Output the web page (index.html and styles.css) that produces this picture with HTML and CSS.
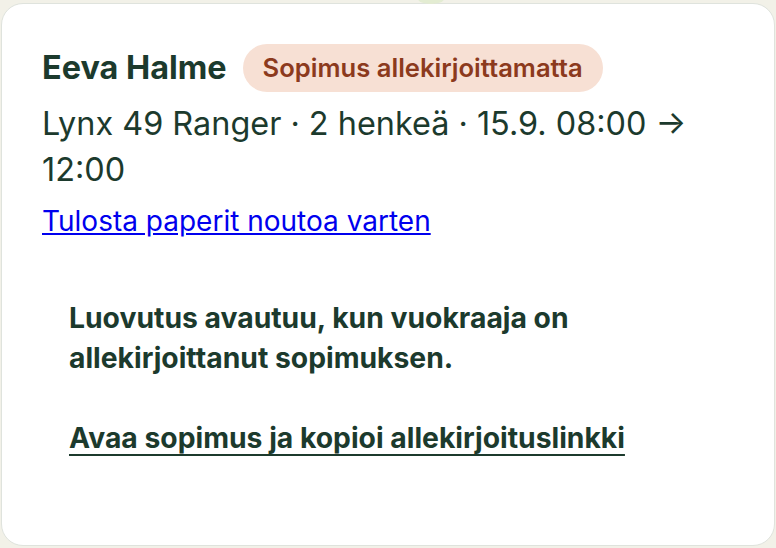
FILE: index.html
```html
<!DOCTYPE html>
<html lang="fi">

<head>
    <meta charset="UTF-8">
    <meta name="viewport" content="width=device-width, initial-scale=1.0">
    <title>Luovutus</title>
    <link rel="stylesheet" href="styles.css">
</head>

<body>
    <div class="tab-peek"></div>
    <div class="booking-card">
        <div class="booking-head">
            <h2 class="renter">Eeva Halme</h2>
            <span class="badge">Sopimus allekirjoittamatta</span>
        </div>
        <p class="booking-meta">Lynx 49 Ranger · 2 henkeä · 15.9. 08:00 → 12:00</p>
        <a class="print-link" href="#">Tulosta paperit noutoa varten</a>

        <div class="handover-note">
            <p class="note-text">Luovutus avautuu, kun vuokraaja on allekirjoittanut sopimuksen.</p>
            <a class="note-link" href="#">Avaa sopimus ja kopioi allekirjoituslinkki</a>
        </div>
    </div>
</body>

</html>
```

FILE: styles.css
```css
/* page */
body {
    margin: 0;
    padding: 3px 1px 2px 1px;
    background-color: #f2f1e8;
    font-family: Inter, "Noto Sans", sans-serif;
    color: #1c3a2d;
    position: relative;
}

/* little green thing peeking in at the top */
.tab-peek {
    position: absolute;
    top: -6px;
    left: 418px;
    width: 26px;
    height: 10px;
    border-radius: 50%;
    background: #e3ecd2;
}

.booking-card {
    background-color: #fff;
    border: 1px solid #dfe3dd;
    border-radius: 22px;
    padding: 40px 40px 0 40px;
    height: 543px;
    box-sizing: border-box;
}

.booking-head {
    display: flex;
    align-items: center;
    gap: 16px;
}

.renter {
    margin: 0;
    font-size: 32.4px;
    font-weight: 700;
    line-height: 40px;
}

.booking-head .badge {
    background-color: #f7e0d4;
    color: #8c3a1d;
    font-size: 25.6px;
    font-weight: 600;
    padding: 9px 20px;
    border-radius: 999px;
    line-height: 30px;
}

.booking-meta {
    margin: 9px 0 11px 0;
    font-size: 32.4px;
    line-height: 46px;
    font-weight: 400;
    padding-right: 30px;
}

.print-link {
    display: inline-block;
    font-size: 28px;
    line-height: 34px;
    color: #0000ee;
}

.handover-note {
    margin-top: 60px;
    padding: 0 27px;
}

.note-text {
    margin: 0 0 41px 0;
    font-size: 28.3px;
    font-weight: 700;
    line-height: 40px;
    max-width: 520px;
}

.note-link {
    font-size: 28.3px;
    font-weight: 700;
    line-height: 39px;
    color: #1c3a2d;
    text-decoration-thickness: 2px;
    text-underline-offset: 6px;
    text-decoration-skip-ink: none;
}
```
